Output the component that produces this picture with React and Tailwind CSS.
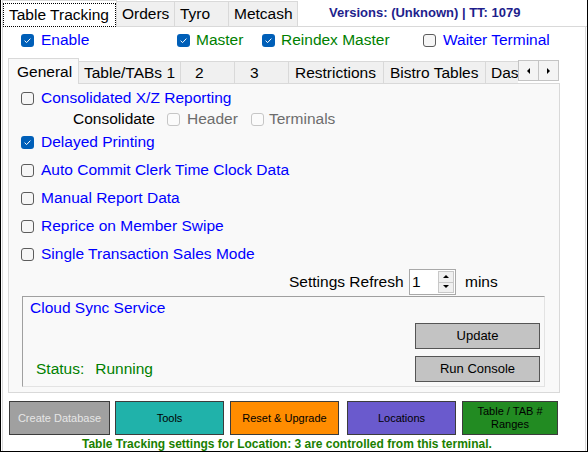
import React from "react";

function Box({ state }) {
  if (state === "on") {
    return (
      <span className="inline-flex shrink-0 w-[13px] h-[13px] rounded-[3px] bg-[#005fb8] items-center justify-center">
        <svg width="13" height="13" viewBox="0 0 13 13">
          <path d="M3.6 6.7 L5.6 8.6 L9.4 4.6" fill="none" stroke="#ffffff" strokeWidth="1" />
        </svg>
      </span>
    );
  }
  if (state === "dis") {
    return <span className="inline-block shrink-0 w-[13px] h-[13px] rounded-[3px] border border-[#c6c6c6] bg-[#fbfbfb]" />;
  }
  return <span className="inline-block shrink-0 w-[13px] h-[13px] rounded-[3px] border border-[#5c5c5c] bg-[#f6f6f6]" />;
}

function CheckRow({ state, label, color = "text-[#0000ff]", gap = "ml-[7px]" }) {
  return (
    <div className="flex items-center">
      <Box state={state} />
      <span className={`${gap} ${color} whitespace-nowrap`}>{label}</span>
    </div>
  );
}

function Tri({ dir }) {
  const d =
    dir === "l" ? "M5 1 L5 7 L2 4 Z" : dir === "r" ? "M2 1 L2 7 L5 4 Z" : dir === "u" ? "M1 5 L7 5 L4 2 Z" : "M1 2 L7 2 L4 5 Z";
  return (
    <svg width="8" height="8" viewBox="0 0 8 8">
      <path d={d} fill="#000000" />
    </svg>
  );
}

export default function App() {
  return (
    <div className="w-[588px] h-[452px] bg-white border-l border-r border-b border-black flex flex-col overflow-hidden font-['Liberation_Sans',Arial,sans-serif] text-[15.5px] leading-[18px] text-black">
      {/* top tab strip */}
      <div className="h-[27px] flex shrink-0 pl-[1px]">
        <div className="w-[115px] h-[27px] border-l border-t border-r border-[#d9d9d9] bg-white flex flex-col">
          <div className="mt-[2px] h-[24px] border border-dotted border-black flex items-center pl-[5px] whitespace-nowrap">
            Table Tracking
          </div>
        </div>
        <div className="mt-[1px] w-[58px] h-[26px] border-t border-r border-b border-[#d9d9d9] bg-[#f0f0f0] flex items-center pl-[5px]">
          Orders
        </div>
        <div className="mt-[1px] w-[54px] h-[26px] border-t border-r border-b border-[#d9d9d9] bg-[#f0f0f0] flex items-center pl-[5px]">
          Tyro
        </div>
        <div className="mt-[1px] w-[69px] h-[26px] border-t border-r border-b border-[#d9d9d9] bg-[#f0f0f0] flex items-center pl-[5px]">
          Metcash
        </div>
        <div className="flex-1 h-[27px] border-b border-[#d9d9d9] flex items-center">
          <span className="ml-[31px] -mt-[1px] text-[13px] font-bold text-[#1e1e8c] whitespace-nowrap">
            Versions: (Unknown) | TT: 1079
          </span>
        </div>
      </div>

      {/* page */}
      <div className="flex-1 mx-[1px] border-l border-r border-[#d9d9d9] flex flex-col">
        {/* checkbox row */}
        <div className="mt-[4px] h-[18px] flex items-center pl-[18px]">
          <div className="w-[156px]">
            <CheckRow state="on" label="Enable" />
          </div>
          <div className="w-[85px]">
            <CheckRow state="on" label="Master" color="text-[#008000]" gap="ml-[6px]" />
          </div>
          <div className="w-[161px]">
            <CheckRow state="on" label="Reindex Master" color="text-[#008000]" gap="ml-[6px]" />
          </div>
          <div>
            <CheckRow state="off" label="Waiter Terminal" gap="ml-[7px]" />
          </div>
        </div>

        {/* inner tabs */}
        <div className="mt-[9px] h-[25px] flex items-end ml-[5px] relative">
          <div className="relative z-10 -mb-[1px] w-[71px] h-[26px] border-l border-t border-r border-[#d9d9d9] bg-[#f9f9f9] flex items-center pl-[8px]">
            General
          </div>
          <div className="w-[102px] h-[22px] border-t border-r border-[#d9d9d9] bg-[#f0f0f0] flex items-center justify-center whitespace-nowrap">
            Table/TABs 1
          </div>
          <div className="w-[54px] h-[22px] border-t border-r border-[#d9d9d9] bg-[#f0f0f0] flex items-center pl-[14px]">
            2
          </div>
          <div className="w-[54px] h-[22px] border-t border-r border-[#d9d9d9] bg-[#f0f0f0] flex items-center pl-[15px]">
            3
          </div>
          <div className="w-[95px] h-[22px] border-t border-r border-[#d9d9d9] bg-[#f0f0f0] flex items-center pl-[6px] whitespace-nowrap">
            Restrictions
          </div>
          <div className="w-[102px] h-[22px] border-t border-r border-[#d9d9d9] bg-[#f0f0f0] flex items-center pl-[6px] whitespace-nowrap">
            Bistro Tables
          </div>
          <div className="w-[32px] h-[22px] border-t border-[#d9d9d9] bg-[#f0f0f0] flex items-center pl-[5px] overflow-hidden whitespace-nowrap">
            Das
          </div>
          <div className="flex self-start mt-[2px]">
            <div className="w-[21px] h-[21px] border border-[#c4c4c4] bg-[#f4f4f4] flex items-center justify-center">
              <Tri dir="l" />
            </div>
            <div className="w-[21px] h-[21px] -ml-[1px] border border-[#c4c4c4] bg-[#f4f4f4] flex items-center justify-center">
              <Tri dir="r" />
            </div>
          </div>
        </div>

        {/* inner panel */}
        <div className="ml-[5px] w-[552px] h-[310px] border border-[#d9d9d9] bg-[#f9f9f9] flex flex-col">
          <div className="mt-[5px] h-[18px] pl-[12px] flex items-center">
            <CheckRow state="off" label="Consolidated X/Z Reporting" />
          </div>
          <div className="mt-[3px] h-[18px] pl-[64px] flex items-center">
            <span className="w-[94px]">Consolidate</span>
            <div className="w-[84px]">
              <CheckRow state="dis" label="Header" color="text-[#6d6d6d]" />
            </div>
            <CheckRow state="dis" label="Terminals" color="text-[#6d6d6d]" gap="ml-[5px]" />
          </div>
          <div className="mt-[5px] h-[18px] pl-[12px] flex items-center">
            <CheckRow state="on" label="Delayed Printing" />
          </div>
          <div className="mt-[10px] h-[18px] pl-[12px] flex items-center">
            <CheckRow state="off" label="Auto Commit Clerk Time Clock Data" />
          </div>
          <div className="mt-[10px] h-[18px] pl-[12px] flex items-center">
            <CheckRow state="off" label="Manual Report Data" />
          </div>
          <div className="mt-[10px] h-[18px] pl-[12px] flex items-center">
            <CheckRow state="off" label="Reprice on Member Swipe" />
          </div>
          <div className="mt-[10px] h-[18px] pl-[12px] flex items-center">
            <CheckRow state="off" label="Single Transaction Sales Mode" />
          </div>

          {/* settings refresh */}
          <div className="mt-[6px] h-[26px] flex items-center pl-[280px]">
            <span className="w-[120px] whitespace-nowrap">Settings Refresh</span>
            <div className="w-[47px] h-[26px] border border-[#a9a9a9] bg-white flex">
              <span className="flex-1 pl-[2px] flex items-center">1</span>
              <div className="w-[17px] flex flex-col py-[1px] pr-[1px]">
                <div className="flex-1 border border-[#c8c8c8] bg-[#f0f0f0] flex items-center justify-center">
                  <Tri dir="u" />
                </div>
                <div className="flex-1 border border-[#c8c8c8] border-t-0 bg-[#f0f0f0] flex items-center justify-center">
                  <Tri dir="d" />
                </div>
              </div>
            </div>
            <span className="ml-[9px]">mins</span>
          </div>

          {/* cloud sync group */}
          <div className="mt-[1px] ml-[13px] w-[523px] h-[91px] border-t border-l border-[#a0a0a0] border-r border-b border-r-[#e3e3e3] border-b-[#e3e3e3] flex flex-col">
            <div className="pt-[2px] pl-[7px] h-[20px] text-[#0000ff] whitespace-nowrap">Cloud Sync Service</div>
            <div className="mt-[6px] flex justify-end pr-[4px]">
              <div className="w-[125px] h-[26px] bg-[#c3c3c3] border border-[#555555] flex items-center justify-center text-[13px]">
                Update
              </div>
            </div>
            <div className="mt-[7px] flex items-center justify-between pr-[4px]">
              <div className="pl-[13px] text-[#008000] whitespace-nowrap">
                Status:<span className="ml-[11px]">Running</span>
              </div>
              <div className="w-[125px] h-[26px] bg-[#c3c3c3] border border-[#555555] flex items-center justify-center text-[13px]">
                Run Console
              </div>
            </div>
          </div>
        </div>

        {/* bottom buttons */}
        <div className="mt-[8px] ml-[6px] flex text-[11px] leading-[13px]">
          <div className="w-[101px] h-[34px] bg-[#a0a0a0] border border-[#3c3c3c] flex items-center justify-center text-[#e6e6e6]">
            Create Database
          </div>
          <div className="ml-[5px] w-[109px] h-[34px] bg-[#20b2aa] border border-[#3c3c3c] flex items-center justify-center">
            Tools
          </div>
          <div className="ml-[6px] w-[109px] h-[34px] bg-[#ff8c00] border border-[#3c3c3c] flex items-center justify-center">
            Reset &amp; Upgrade
          </div>
          <div className="ml-[8px] w-[109px] h-[34px] bg-[#6a5acd] border border-[#3c3c3c] flex items-center justify-center">
            Locations
          </div>
          <div className="ml-[6px] w-[96px] h-[34px] bg-[#228b22] border border-[#3c3c3c] flex flex-col items-center justify-center text-center">
            <span>Table / TAB #</span>
            <span>Ranges</span>
          </div>
        </div>
        <div className="mt-[2px] ml-[79px] w-[403px] text-center whitespace-nowrap text-[12px] leading-[14px] font-bold text-[#1a7f00]">
          Table Tracking settings for Location: 3 are controlled from this terminal.
        </div>
      </div>
    </div>
  );
}
